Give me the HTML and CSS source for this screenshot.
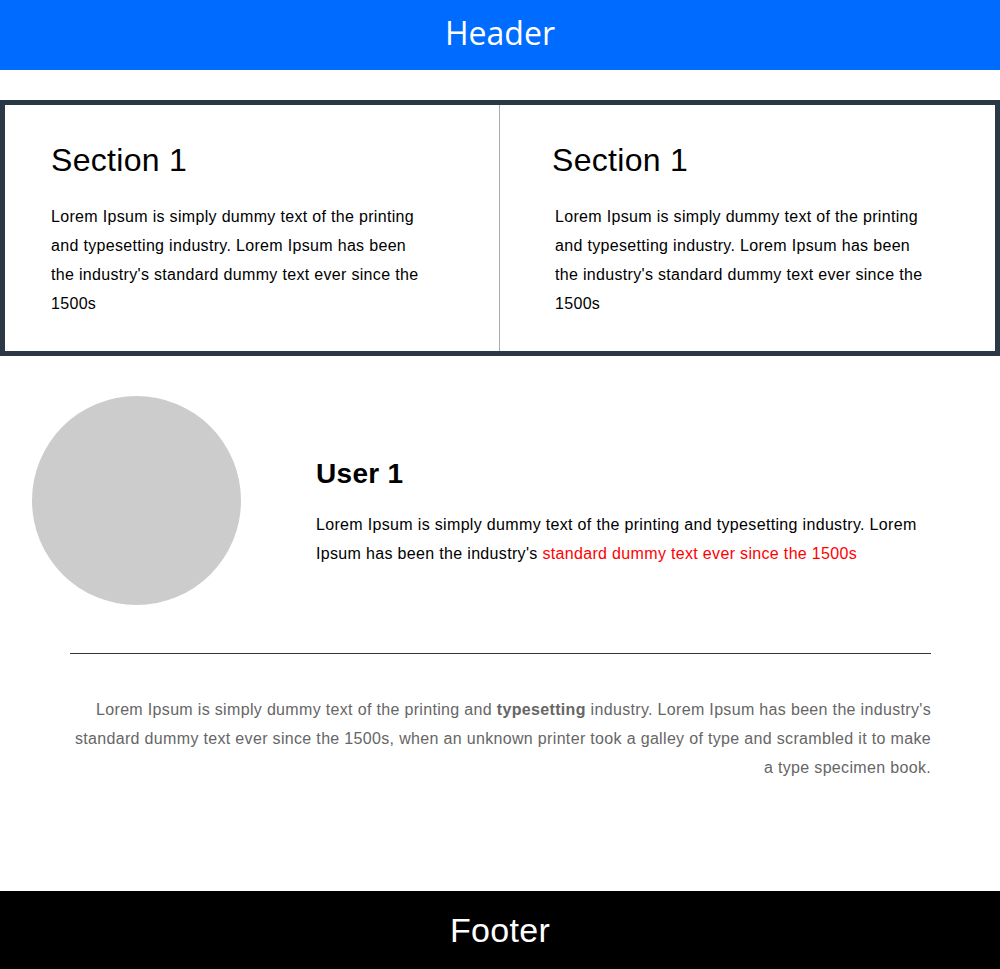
FILE: index.html
```html
<!DOCTYPE html>
<html lang="en">
<head>
<meta charset="utf-8">
<title>Layout</title>
<link rel="stylesheet" href="styles.css">
</head>
<body>
<header class="site-header">Header</header>
<main class="main">
  <section class="sections">
    <div class="col col-left">
      <h2 class="col-title">Section 1</h2>
      <p class="col-text">Lorem Ipsum is simply dummy text of the printing and typesetting industry. Lorem Ipsum has been the industry's standard dummy text ever since the 1500s</p>
    </div>
    <div class="col col-right">
      <h2 class="col-title">Section 1</h2>
      <p class="col-text col-text-shift">Lorem Ipsum is simply dummy text of the printing and typesetting industry. Lorem Ipsum has been the industry's standard dummy text ever since the 1500s</p>
    </div>
  </section>
  <section class="user">
    <div class="avatar"></div>
    <div class="user-body">
      <h3 class="user-name">User 1</h3>
      <p class="user-text">Lorem Ipsum is simply dummy text of the printing and typesetting industry. Lorem Ipsum has been the industry's <span class="highlight">standard dummy text ever since the 1500s</span></p>
    </div>
  </section>
  <div class="about">
    <hr class="divider">
    <p class="about-text">Lorem Ipsum is simply dummy text of the printing and <strong>typesetting</strong> industry. Lorem Ipsum has been the industry's standard dummy text ever since the 1500s, when an unknown printer took a galley of type and scrambled it to make a type specimen book.</p>
  </div>
</main>
<footer class="site-footer">Footer</footer>
</body>
</html>
```

FILE: styles.css
```css
* { box-sizing: border-box; }
html, body { margin: 0; padding: 0; }
body {
  min-height: 100vh;
  display: flex;
  flex-direction: column;
  font-family: "Liberation Sans", Arial, sans-serif;
  color: #000;
  background: #fff;
}
.site-header {
  height: 70px;
  line-height: 66px;
  background: #006cff;
  color: #fff;
  text-align: center;
  font-family: "Open Sans", "Noto Sans", sans-serif;
  font-size: 32px;
}
.main { display: block; }
.sections {
  margin-top: 30px;
  border: 5px solid #2b3845;
  display: grid;
  grid-template-columns: 1fr 1fr;
}
.col {
  padding: 37px 0 33px 0;
}
.col-left {
  border-right: 1px solid #aaa;
  padding-left: 46px;
}
.col-right {
  padding-left: 52px;
}
.col-title {
  margin: 0 0 23px 0;
  font-size: 32px;
  font-weight: normal;
  line-height: normal;
  letter-spacing: 0.3px;
}
.col-text {
  margin: 0;
  width: 380px;
  font-size: 16px;
  line-height: 29px;
  letter-spacing: 0.32px;
}
.col-text-shift { margin-left: 3px; }
.user {
  display: flex;
  align-items: flex-start;
  margin-top: 40px;
  padding-left: 32px;
}
.avatar {
  flex: none;
  width: 209px;
  height: 209px;
  border-radius: 50%;
  background: #ccc;
}
.user-body {
  margin-left: 75px;
  padding-top: 62px;
}
.user-name {
  margin: 0 0 20px 0;
  font-size: 28px;
  font-weight: bold;
  line-height: normal;
  letter-spacing: 0.3px;
}
.user-text {
  margin: 0;
  width: 612px;
  font-size: 16px;
  line-height: 29px;
  letter-spacing: 0.33px;
}
.highlight { color: #ff0000; }
.about {
  margin: 48px 0 0 70px;
  width: 861px;
}
.divider {
  margin: 0;
  border: 0;
  border-top: 1px solid #333;
  height: 0;
}
.about-text {
  margin: 41px 0 0 0;
  text-align: right;
  color: #666;
  font-size: 16px;
  line-height: 29px;
  letter-spacing: 0.33px;
}
.about-text strong { font-weight: bold; }
.site-footer {
  margin-top: auto;
  height: 78px;
  padding-top: 1px;
  line-height: 77px;
  background: #000;
  color: #fff;
  text-align: center;
  font-size: 34px;
  letter-spacing: 0.3px;
}
```
